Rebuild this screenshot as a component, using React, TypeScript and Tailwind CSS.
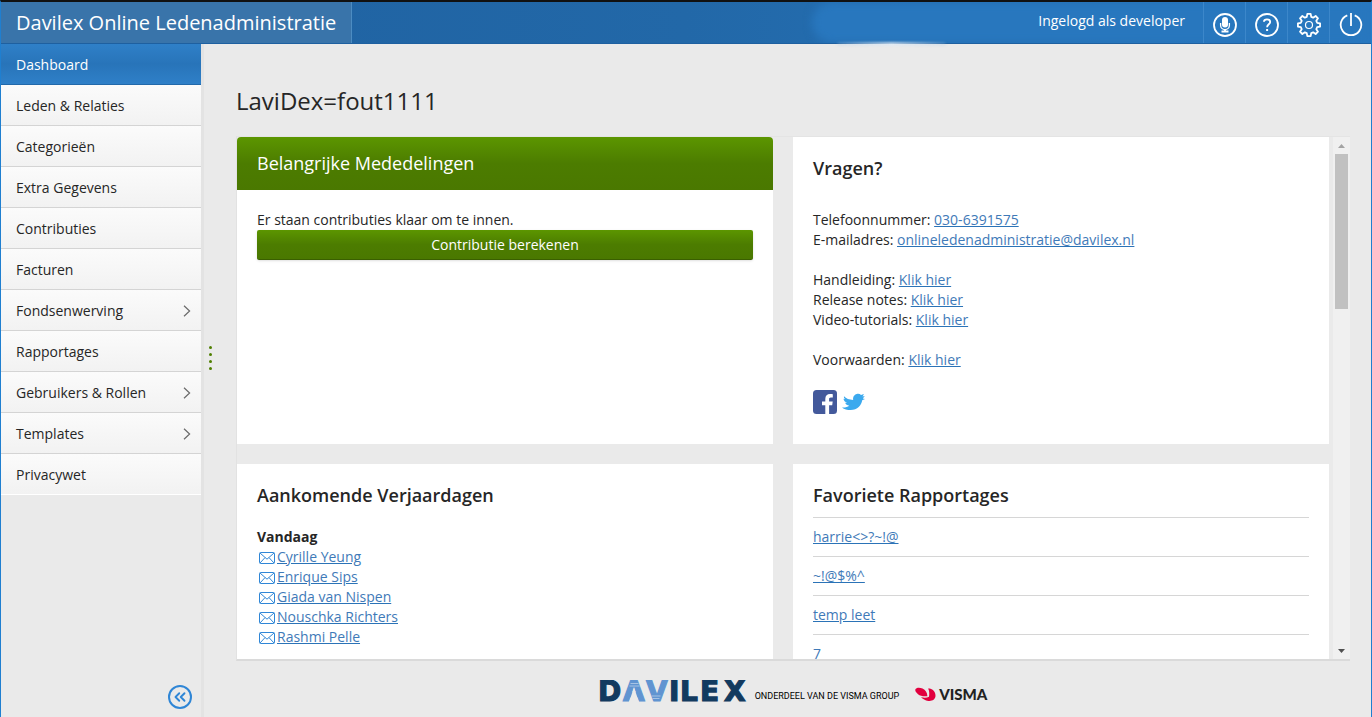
import type { ReactNode } from "react";
import { ChevronsLeft } from "lucide-react";

const menu = [
  { label: "Dashboard", active: true },
  { label: "Leden & Relaties" },
  { label: "Categorieën" },
  { label: "Extra Gegevens" },
  { label: "Contributies" },
  { label: "Facturen" },
  { label: "Fondsenwerving", sub: true },
  { label: "Rapportages" },
  { label: "Gebruikers & Rollen", sub: true },
  { label: "Templates", sub: true },
  { label: "Privacywet" },
];

const birthdays = ["Cyrille Yeung", "Enrique Sips", "Giada van Nispen", "Nouschka Richters", "Rashmi Pelle"];
const reports = ["harrie<>?~!@", "~!@$%^", "temp leet", "7"];

function Link({ children }: { children: ReactNode }) {
  return (
    <a href="#" className="text-[#3f7ab8] underline decoration-[#2b73b7]">
      {children}
    </a>
  );
}

function Chevron() {
  return (
    <svg width="8" height="12" viewBox="0 0 8 12" fill="none" stroke="#6a6a6a" strokeWidth="1.2" aria-hidden="true">
      <path d="M1 .7 6.6 6 1 11.3" />
    </svg>
  );
}

function Envelope() {
  return (
    <svg className="mt-0.5" width="16" height="12" viewBox="0 0 16 12" fill="none" stroke="#2f86d6" aria-hidden="true">
      <rect x=".5" y=".5" width="15" height="11" rx="1" />
      <path d="M1 1 8 7.2 15 1M1 11 6 5.6M15 11 10 5.6" />
    </svg>
  );
}

function MicIcon() {
  return (
    <svg width="24" height="24" viewBox="0 0 24 24" fill="none" stroke="#fff" strokeWidth="1.8" aria-hidden="true">
      <circle cx="12" cy="12" r="11" />
      <rect x="9" y="4" width="6" height="10.500" rx="3" fill="#fff" stroke="none" />
      <path d="M7.600 10v2.200a4.400 4.400 0 0 0 8.800 0V10" strokeWidth="1.300" />
      <path d="M12 16v3M8.500 18.500h7" strokeWidth="2" />
    </svg>
  );
}

function HelpIcon() {
  return (
    <svg width="24" height="24" viewBox="0 0 24 24" fill="none" stroke="#fff" strokeWidth="1.8" aria-hidden="true">
      <circle cx="12" cy="12" r="11" />
      <path d="M8.900 8.800C9 7 10.200 6.400 12 6.400s3.200.9 3.200 2.500c0 2.300-3.100 2.500-3.100 5.300" />
      <path d="M12.100 16v2" strokeWidth="2" />
    </svg>
  );
}

function gearPath() {
  const pts: string[] = [];
  for (let i = 0; i < 8; i++) {
    const base = (i * Math.PI) / 4;
    [
      [-0.27, 8.4],
      [-0.15, 11.2],
      [0.15, 11.2],
      [0.27, 8.4],
    ].forEach(([a, r]) => {
      pts.push(`${(12 + r * Math.sin(base + a)).toFixed(2)} ${(12 - r * Math.cos(base + a)).toFixed(2)}`);
    });
  }
  return `M${pts.join("L")}Z`;
}

function GearIcon() {
  return (
    <svg width="24" height="24" viewBox="0 0 24 24" fill="none" stroke="#fff" strokeWidth="1.8" strokeLinejoin="round" aria-hidden="true">
      <path d={gearPath()} />
      <circle cx="12" cy="12" r="3.500" strokeWidth="1.200" />
    </svg>
  );
}

function PowerIcon() {
  return (
    <svg width="24" height="24" viewBox="0 0 24 24" fill="none" stroke="#fff" strokeWidth="1.8" aria-hidden="true">
      <path d="M8.300 2.300A10.300 10.300 0 1 0 15.700 2.300M12 0v13" />
    </svg>
  );
}

function Facebook() {
  return (
    <svg width="24" height="24" viewBox="0 0 24 24" aria-hidden="true">
      <rect width="24" height="24" rx="3.500" fill="#43599b" />
      <path d="M12.300 24v-8.800H9v-3.600h3.300V9c0-3.200 1.900-4.900 4.800-4.900 1.300 0 2.200.1 2.700.2v3.300h-1.900c-1.500 0-1.800.7-1.800 1.800v2.200h3.600l-.5 3.600h-3.100V24z" fill="#fff" />
    </svg>
  );
}

function Twitter() {
  return (
    <svg width="24" height="20" viewBox="0 0 24 20" aria-hidden="true">
      <path
        d="M3 4.200C5.200 6.600 8 7.600 12.200 8 11.600 4.900 13.300 2.500 15.800 1.900c1.800-.4 3.200 0 4.200 1.100l3-1.100-1.500 2.500 2.300-.5-2 2.500 2.200.7-2.800 1.100c-.6 4.900-4.800 9.800-11.600 9.800-3.200 0-6.400-.8-8.600-2.600 3 .2 5.400-.3 7.200-1.700-2-.3-3.400-1.200-4-2.900h1.900C4 10 2.700 8.700 2.500 6.800l1.700.4C3.200 6.400 2.700 5.400 3 4.200z"
        fill="#3ba9ee"
      />
    </svg>
  );
}

function DavilexLogo() {
  return (
    <svg width="150" height="22" viewBox="0 0 150 22" role="img" aria-label="Davilex">
      <g fontFamily="'DejaVu Sans', sans-serif" fontWeight="700" fontSize="28" fill="#123a5f" stroke="#123a5f" strokeWidth="1.2">
        <text x="-1" y="21">D</text>
        <text x="24" y="21" fill="#6094d1" stroke="#6094d1">A</text>
        <text x="47" y="21" fill="#6094d1" stroke="#6094d1">V</text>
        <text x="70" y="21">I</text>
        <text x="81" y="21">L</text>
        <text x="101" y="21">E</text>
        <text x="125" y="21">X</text>
      </g>
      <path d="M35 7.500 30 22h10z" fill="#eaeaea" />
      <path d="M31.500 3.500h8M30.500 6h10M52.500 16h9M53.500 18.500h7" stroke="#b9cfe8" strokeWidth=".8" />
    </svg>
  );
}

function VismaMark() {
  return (
    <svg width="22" height="15" viewBox="0 0 22 15" aria-hidden="true">
      <path d="M.3 2.600C1.200.4 4.500.3 7.500 1.500c3 1.300 4.700 4 4.900 7.700C8.500 9.700 5.200 9 3 7.200.9 5.500 0 3.900.3 2.600z" fill="#e2003f" />
      <path d="M14.800 1.500c3.500.8 6 3.900 5.700 7.600-.3 3.600-3.500 5.300-7.200 4.800-3.100-.4-5.500-1.700-7.300-3.600 3.400.8 6 .6 8-.5.500-3.200.4-6-.9-8.400z" fill="#e2003f" />
    </svg>
  );
}

const iconButtons = [
  { label: "Opname", icon: <MicIcon /> },
  { label: "Help", icon: <HelpIcon /> },
  { label: "Instellingen", icon: <GearIcon /> },
  { label: "Uitloggen", icon: <PowerIcon /> },
];

function Card({ children, className = "" }: { children: ReactNode; className?: string }) {
  return <section className={`bg-white ${className}`}>{children}</section>;
}

export default function App() {
  return (
    <div className="flex h-screen flex-col border-x border-t-2 border-x-[#1f7fd0] border-t-[#111] bg-[#eaeaea] font-['Open_Sans',sans-serif] text-sm leading-5 text-[#262626]">
      <header className="relative flex h-[42px] shrink-0 items-stretch border-b border-[#1e60a0] bg-linear-to-r from-[#1f61a0] via-[#2268a8] to-[#2878c0] text-white">
        <div className="flex items-center border-r border-[#4c8cc2] bg-[#3974aa] px-[15px] text-xl">
          Davilex Online Ledenadministratie
        </div>
        <div className="absolute inset-y-0 left-[58%] right-0 overflow-hidden">
          <div className="ml-4 h-full rounded-l-full bg-[#2877be] blur-xs" />
        </div>
        <div className="absolute left-[61%] top-10 h-1 w-[8%] rounded-full bg-linear-to-r from-[#9dbfdf]/20 via-[#dfeaf5]/80 to-[#9dbfdf]/20 blur-[1px]" />
        <div className="relative ml-auto flex">
          <span className="pr-[18px] pt-[9px]">Ingelogd als developer</span>
          {iconButtons.map((b) => (
            <button key={b.label} type="button" aria-label={b.label} className="flex w-[42px] items-center justify-center border-l border-[#3c87ca] pt-1">
              {b.icon}
            </button>
          ))}
        </div>
      </header>

      <div className="flex min-h-0 flex-1">
        <aside className="flex w-[203px] shrink-0 flex-col justify-between border-r-3 border-[#e3e3e3]">
          <nav>
            {menu.map((m) => (
              <a
                key={m.label}
                href="#"
                className={
                  m.active
                    ? "flex h-[41px] items-center justify-between border-b border-[#2269aa] bg-linear-to-b from-[#2f80c8] via-[#2874b9] to-[#2f80c8] px-[15px] pt-0.5 text-white"
                    : "flex h-[41px] items-center justify-between border-b border-[#d4d4d4] bg-linear-to-b from-[#fbfbfb] to-[#f2f2f2] pl-[15px] pr-[10px] pt-0.5 last:border-white"
                }
              >
                {m.label}
                {m.sub && <Chevron />}
              </a>
            ))}
          </nav>
          <div className="flex justify-end pb-2 pr-[9px]">
            <button type="button" aria-label="Menu inklappen" className="flex size-6 items-center justify-center rounded-full border-2 border-[#2f86d6] text-[#2f86d6]">
              <ChevronsLeft size={18} strokeWidth={2.5} />
            </button>
          </div>
        </aside>

        <div className="flex w-[13px] shrink-0 flex-col items-center justify-center gap-1 pb-[46px]">
          {[0, 1, 2, 3].map((i) => (
            <span key={i} className="size-[3px] rounded-full bg-[#4f7f00]" />
          ))}
        </div>

        <div className="flex min-w-0 flex-1 flex-col pl-[19px] pr-[21px]">
          <h1 className="pb-[19px] pt-[41px] text-2xl leading-8">LaviDex=fout1111</h1>
          <div className="flex min-h-0 flex-1 justify-between border-t border-b-2 border-l border-t-[#e4e4e4] border-b-[#dadada] border-l-[#e2e2e2]">
            <main className="grid min-w-0 flex-1 auto-rows-[307px] grid-cols-2 gap-5 overflow-hidden">
              <Card className="rounded-t">
                <h2 className="flex h-[53px] items-center rounded-t bg-linear-to-b from-[#5c9600] via-[#4c7c00] to-[#4a7800] px-5 pb-0.5 text-lg text-white">
                  Belangrijke Mededelingen
                </h2>
                <div className="px-5 pt-5">
                  <p>Er staan contributies klaar om te innen.</p>
                  <button type="button" className="h-[30px] w-full rounded-xs border-b border-[#3a5f00] bg-linear-to-b from-[#5c9600] via-[#4c7c00] to-[#4a7800] text-white shadow-sm">
                    Contributie berekenen
                  </button>
                </div>
              </Card>

              <Card className="px-5 pt-[19px]">
                <h2 className="text-lg leading-6 font-semibold">Vragen?</h2>
                <p className="mt-[30px]">Telefoonnummer: <Link>030-6391575</Link></p>
                <p>E-mailadres: <Link>onlineledenadministratie@davilex.nl</Link></p>
                <p className="mt-5">Handleiding: <Link>Klik hier</Link></p>
                <p>Release notes: <Link>Klik hier</Link></p>
                <p>Video-tutorials: <Link>Klik hier</Link></p>
                <p className="mt-5">Voorwaarden: <Link>Klik hier</Link></p>
                <div className="mt-5 flex items-center gap-1">
                  <a href="#" aria-label="Facebook"><Facebook /></a>
                  <a href="#" aria-label="Twitter"><Twitter /></a>
                </div>
              </Card>

              <Card className="px-5 pt-[19px]">
                <h2 className="text-lg leading-6 font-semibold">Aankomende Verjaardagen</h2>
                <h3 className="mt-5 font-bold">Vandaag</h3>
                <ul>
                  {birthdays.map((name) => (
                    <li key={name} className="flex items-center gap-0.5 pl-0.5">
                      <Envelope />
                      <Link>{name}</Link>
                    </li>
                  ))}
                </ul>
              </Card>

              <Card className="px-5 pt-[19px]">
                <h2 className="text-lg leading-6 font-semibold">Favoriete Rapportages</h2>
                <ul className="mt-2.5">
                  {reports.map((r) => (
                    <li key={r} className="flex h-[39px] items-center border-t border-[#d6d6d6]">
                      <Link>{r}</Link>
                    </li>
                  ))}
                </ul>
              </Card>
            </main>
            <div className="ml-1 flex w-[17px] shrink-0 flex-col items-center bg-[#f0f0f0]">
              <span className="flex h-[17px] items-center">
                <svg width="7" height="4" viewBox="0 0 7 4" aria-hidden="true"><path d="M0 4 3.500 0 7 4z" fill="#a3a3a3" /></svg>
              </span>
              <div className="h-[155px] w-[13px] bg-[#c1c1c1]" />
              <span className="mt-auto flex h-[17px] items-center">
                <svg width="7" height="4" viewBox="0 0 7 4" aria-hidden="true"><path d="M0 0h7L3.500 4z" fill="#505050" /></svg>
              </span>
            </div>
          </div>
          <footer className="flex h-14 shrink-0 items-end justify-center pb-[15px]">
            <DavilexLogo />
            <span className="ml-1.5 font-[Roboto,sans-serif] text-[9px] leading-[12px] text-black">ONDERDEEL VAN DE VISMA GROUP</span>
            <span className="ml-4"><VismaMark /></span>
            <span className="ml-0.5 font-[Lato,sans-serif] text-[15px] leading-4 font-black text-[#222]">VISMA</span>
          </footer>
        </div>
      </div>
    </div>
  );
}
